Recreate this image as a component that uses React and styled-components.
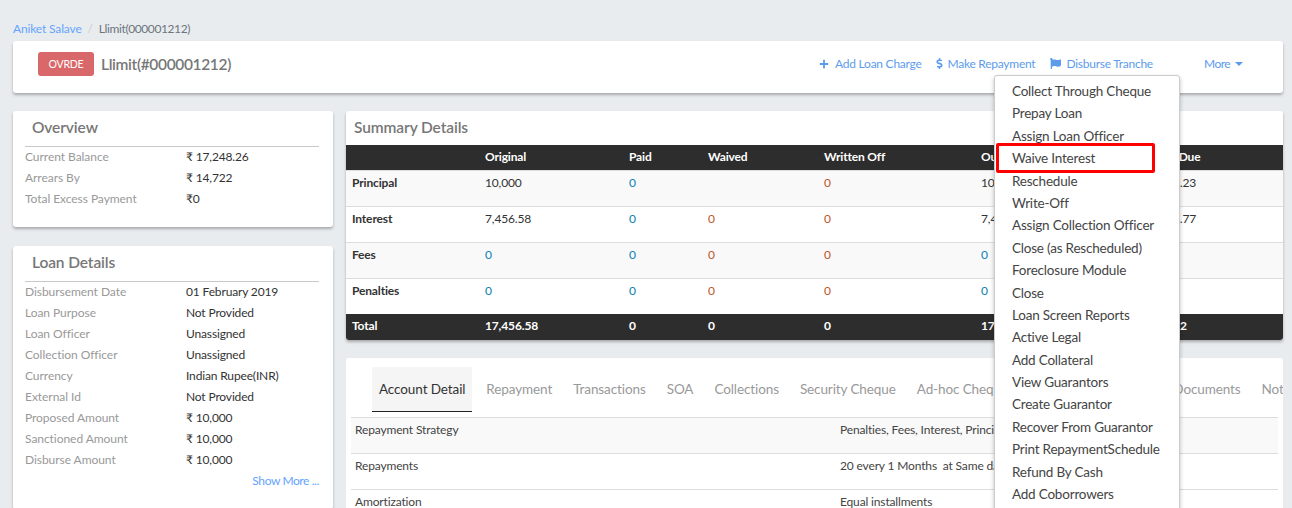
import React from 'react';
import styled, { createGlobalStyle } from 'styled-components';
import { FaPlus, FaDollarSign, FaFlag } from 'react-icons/fa';

const GlobalStyle = createGlobalStyle`
    html, body {
        margin: 0;
        height: 508px;
        overflow: hidden;
        background: #e9ecef;
        font-family: "Lato", "Noto Sans", sans-serif;
        letter-spacing: -0.15px;
    }
    * {
        box-sizing: border-box;
    }
`

const overview = [
    ['Current Balance', '₹ 17,248.26'],
    ['Arrears By', '₹ 14,722'],
    ['Total Excess Payment', '₹0'],
]

const loanDetails = [
    ['Disbursement Date', '01 February 2019'],
    ['Loan Purpose', 'Not Provided'],
    ['Loan Officer', 'Unassigned'],
    ['Collection Officer', 'Unassigned'],
    ['Currency', 'Indian Rupee(INR)'],
    ['External Id', 'Not Provided'],
    ['Proposed Amount', '₹ 10,000'],
    ['Sanctioned Amount', '₹ 10,000'],
    ['Disburse Amount', '₹ 10,000'],
]

const summaryRows = [
    ['Principal', '10,000', '0', '', '0', '10,000', '7,265.23'],
    ['Interest', '7,456.58', '0', '0', '0', '7,456.58', '7,456.77'],
    ['Fees', '0', '0', '0', '0', '0', '0'],
    ['Penalties', '0', '0', '0', '0', '0', '0'],
]

const menuItems = [
    'Collect Through Cheque', 'Prepay Loan', 'Assign Loan Officer', 'Waive Interest', 'Reschedule',
    'Write-Off', 'Assign Collection Officer', 'Close (as Rescheduled)', 'Foreclosure Module', 'Close',
    'Loan Screen Reports', 'Active Legal', 'Add Collateral', 'View Guarantors', 'Create Guarantor',
    'Recover From Guarantor', 'Print RepaymentSchedule', 'Refund By Cash', 'Add Coborrowers',
]

const tabs = ['Account Detail', 'Repayment', 'Transactions', 'SOA', 'Collections', 'Security Cheque', 'Ad-hoc Cheques', 'Guarantors Detailed', 'Documents', 'Notes']

const accountRows = [
    ['Repayment Strategy', 'Penalties, Fees, Interest, Principal order'],
    ['Repayments', '20 every 1 Months  at Same day of month'],
    ['Amortization', 'Equal installments'],
]

const InfoCard = ({ title, rows, children }) => (
    <Card>
        <CardTitle>{title}</CardTitle>
        <div>
            {rows.map(([label, value]) => (
                <InfoRow key={label}>
                    <InfoLabel>{label}</InfoLabel>
                    <span>{value}</span>
                </InfoRow>
            ))}
        </div>
        {children}
    </Card>
)

const App = () => {
    return (
        <Page>
            <GlobalStyle />
            <Breadcrumb>
                <a>Aniket Salave</a>
                <Slash>/</Slash>
                <span>Llimit(000001212)</span>
            </Breadcrumb>
            <Header>
                <Badge>OVRDE</Badge>
                <LoanName>Llimit(#000001212)</LoanName>
                <Actions>
                    <Action $gap={6} $space={12}><FaPlus size={10} />Add Loan Charge</Action>
                    <Action $gap={3} $space={15}><FaDollarSign size={11} />Make Repayment</Action>
                    <Action $gap={5} $space={14}><FaFlag size={11} />Disburse Tranche</Action>
                    <More>
                        <MoreLabel>More</MoreLabel> <Caret />
                        <Menu>
                            {menuItems.map((item) => (
                                <MenuItem key={item}>{item}</MenuItem>
                            ))}
                            <Highlight />
                        </Menu>
                    </More>
                </Actions>
            </Header>
            <Columns>
                <LeftColumn>
                    <InfoCard title="Overview" rows={overview} />
                    <InfoCard title="Loan Details" rows={loanDetails}>
                        <ShowMore>Show More ...</ShowMore>
                    </InfoCard>
                </LeftColumn>
                <RightColumn>
                    <SummaryCard>
                        <SummaryTitle>Summary Details</SummaryTitle>
                        <SummaryTable>
                            <colgroup>
                                <col width="133" />
                                <col width="144" />
                                <col width="79" />
                                <col width="116" />
                                <col width="157" />
                                <col width="169" />
                                <col />
                            </colgroup>
                            <thead>
                                <tr>
                                    <th></th>
                                    <th>Original</th>
                                    <th>Paid</th>
                                    <th>Waived</th>
                                    <th>Written Off</th>
                                    <th>Outstanding</th>
                                    <th>Over Due</th>
                                </tr>
                            </thead>
                            <tbody>
                                {summaryRows.map((row) => (
                                    <tr key={row[0]}>
                                        <RowHead>{row[0]}</RowHead>
                                        <Amount $tone={row[1] === '0' ? 'paid' : undefined}>{row[1]}</Amount>
                                        <Amount $tone="paid">{row[2]}</Amount>
                                        <Amount $tone="waived">{row[3]}</Amount>
                                        <Amount $tone="waived">{row[4]}</Amount>
                                        <Amount $tone={row[5] === '0' ? 'paid' : undefined}>{row[5]}</Amount>
                                        <Amount>{row[6]}</Amount>
                                    </tr>
                                ))}
                            </tbody>
                            <tfoot>
                                <tr>
                                    <th>Total</th>
                                    <th>17,456.58</th>
                                    <th>0</th>
                                    <th>0</th>
                                    <th>0</th>
                                    <th>17,456.58</th>
                                    <th>14,722</th>
                                </tr>
                            </tfoot>
                        </SummaryTable>
                    </SummaryCard>
                    <TabsCard>
                        <TabBar>
                            {tabs.map((tab, i) => (
                                <Tab key={tab} $active={i === 0}>{tab}</Tab>
                            ))}
                        </TabBar>
                        <AccountTable>
                            <tbody>
                                {accountRows.map(([label, value]) => (
                                    <tr key={label}>
                                        <td>{label}</td>
                                        <td>{value}</td>
                                    </tr>
                                ))}
                            </tbody>
                        </AccountTable>
                    </TabsCard>
                </RightColumn>
            </Columns>
        </Page>
    )
}

const Page = styled.div`
    padding: 21px 9px 0 13px;
    height: 508px;
    overflow: hidden;
`

const Breadcrumb = styled.div`
    display: flex;
    align-items: center;
    height: 15px;
    margin-bottom: 5px;
    font-size: 12px;
    color: #6c757d;
    span:last-child {
        letter-spacing: -0.4px;
    }
    a {
        color: #63a4ff;
    }
`

const Slash = styled.span`
    margin: 0 6px;
    color: #ccc;
`

const Header = styled.div`
    display: flex;
    align-items: center;
    height: 52px;
    padding: 0 0 6px 25px;
    background: #fff;
    border-radius: 3px;
    box-shadow: 0 2px 3px rgba(0, 0, 0, 0.28);
`

const Badge = styled.div`
    width: 56px;
    height: 24px;
    margin-right: 7px;
    background: #d9686a;
    border-radius: 3px;
    color: #fff;
    font-size: 10.5px;
    letter-spacing: -0.2px;
    line-height: 24px;
    text-align: center;
`

const LoanName = styled.div`
    font-size: 15.5px;
    font-weight: 600;
    letter-spacing: -0.35px;
    color: #777;
`

const Actions = styled.div`
    display: flex;
    align-items: center;
    margin-left: auto;
    padding: 0 40px 1px 0;
    font-size: 12px;
    letter-spacing: -0.25px;
    color: #5d9cec;
`

const Action = styled.div`
    display: flex;
    align-items: center;
    gap: ${(props) => props.$gap}px;
    margin-right: ${(props) => props.$space}px;
`

const More = styled.div`
    position: relative;
    margin-left: 37px;
`

const MoreLabel = styled.span`
    letter-spacing: -0.5px;
`

const Caret = styled.span`
    display: inline-block;
    margin-left: 2px;
    vertical-align: 2px;
    border-top: 4px solid #5d9cec;
    border-left: 4px solid transparent;
    border-right: 4px solid transparent;
`

const Menu = styled.div`
    position: absolute;
    top: 19px;
    left: -210px;
    width: 186px;
    height: 460px;
    padding: 4px 0 0 17px;
    background: #fff;
    border: 1px solid #ccc;
    border-radius: 3px;
    box-shadow: 0 2px 4px rgba(0, 0, 0, 0.25);
    font-size: 13.5px;
    letter-spacing: -0.2px;
    color: #444;
    z-index: 2;
`

const MenuItem = styled.div`
    height: 22.4px;
    line-height: 22px;
    white-space: nowrap;
`

const Highlight = styled.div`
    position: absolute;
    top: 67px;
    left: 1px;
    width: 159px;
    height: 30px;
    border: 3px solid #f00;
    border-radius: 2px;
`

const Columns = styled.div`
    display: grid;
    grid-template-columns: 320px 937px;
    gap: 13px;
    margin-top: 18px;
`

const LeftColumn = styled.div`
    display: flex;
    flex-direction: column;
    gap: 19px;
`

const RightColumn = styled.div`
    display: flex;
    flex-direction: column;
    gap: 18px;
`

const Card = styled.div`
    padding: 5px 14px 17px 12px;
    background: #fff;
    border-radius: 3px;
    box-shadow: 0 2px 3px rgba(0, 0, 0, 0.28);
`

const CardTitle = styled.div`
    height: 31px;
    padding-left: 7px;
    border-bottom: 1px solid #c8c8c8;
    font-size: 15.5px;
    font-weight: 600;
    letter-spacing: -0.1px;
    line-height: 22px;
    color: #777;
`

const InfoRow = styled.div`
    display: grid;
    grid-template-columns: 161px 1fr;
    height: 21px;
    font-size: 12px;
    line-height: 19px;
    color: #333;
`

const InfoLabel = styled.span`
    letter-spacing: -0.05px;
    color: #999;
`

const ShowMore = styled.div`
    height: 21px;
    font-size: 12px;
    letter-spacing: -0.4px;
    line-height: 19px;
    text-align: right;
    color: #63a4ff;
`

const SummaryCard = styled.div`
    background: #fff;
    border-radius: 3px;
    box-shadow: 0 2px 3px rgba(0, 0, 0, 0.28);
    overflow: hidden;
`

const SummaryTitle = styled.div`
    height: 34px;
    padding-left: 8px;
    font-size: 15.5px;
    font-weight: 600;
    letter-spacing: -0.1px;
    line-height: 32px;
    color: #777;
`

const SummaryTable = styled.table`
    width: 100%;
    border-collapse: collapse;
    table-layout: fixed;
    font-size: 12px;
    th {
        height: 25px;
        padding: 0 6px 2px;
        background: #2d2d2d;
        color: #fff;
        text-align: left;
    }
    tfoot th {
        height: 26px;
        padding-bottom: 4px;
    }
    tbody tr:nth-child(odd) {
        background: #f9f9f9;
    }
`

const Amount = styled.td`
    height: 36px;
    padding: 4px 6px;
    vertical-align: top;
    border-top: 1px solid #ddd;
    color: ${(props) => (props.$tone === 'paid' ? '#0b7fb5' : props.$tone === 'waived' ? '#c0552b' : '#333')};
`

const RowHead = styled(Amount)`
    font-weight: 700;
`

const TabsCard = styled.div`
    height: 200px;
    padding: 9px 5px 0;
    background: #fff;
    border-radius: 3px;
    overflow: hidden;
`

const TabBar = styled.div`
    display: flex;
    gap: 7px;
    height: 51px;
    padding-left: 21px;
    border-bottom: 1px solid #ddd;
    font-size: 13.5px;
    letter-spacing: -0.1px;
    white-space: nowrap;
`

const Tab = styled.div`
    height: 45px;
    padding: 0 7px;
    background: ${(props) => (props.$active ? '#f5f5f5' : 'transparent')};
    border-bottom: 1px solid ${(props) => (props.$active ? '#222' : 'transparent')};
    line-height: 44px;
    color: ${(props) => (props.$active ? '#333' : '#999')};
`

const AccountTable = styled.table`
    width: 100%;
    border-collapse: separate;
    border-spacing: 0;
    table-layout: fixed;
    font-size: 12px;
    color: #444;
    td {
        height: 36px;
        padding: 4px;
        vertical-align: top;
        border-bottom: 1px solid #ddd;
        white-space: pre;
    }
    td:first-child {
        width: 485px;
    }
    tr:nth-child(1) {
        background: #f9f9f9;
    }
`

export default App
